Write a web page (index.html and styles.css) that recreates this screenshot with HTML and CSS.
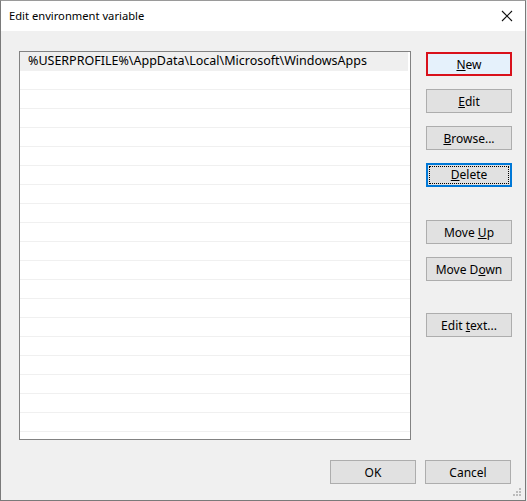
FILE: index.html
```html
<!DOCTYPE html>
<html lang="en">
<head>
    <meta charset="UTF-8">
    <title>Edit environment variable</title>
    <link rel="stylesheet" href="styles.css">
</head>
<body>

<div class="window">
    <div class="titlebar">
        <span class="title">Edit environment variable</span>
        <svg class="close" width="12" height="12" viewBox="0 0 12 12">
            <path d="M1 1 L11 11 M11 1 L1 11" stroke="#111" stroke-width="1.1" fill="none"/>
        </svg>
    </div>

    <div class="content">
        <div class="main">
            <div class="list" id="list">
                <!-- rows are filled by the script below -->
            </div>

            <div class="side">
                <button class="btn btn-marked"><u>N</u>ew</button>
                <button class="btn"><u>E</u>dit</button>
                <button class="btn"><u>B</u>rowse...</button>
                <button class="btn btn-focus"><span class="focus-ring"><u>D</u>elete</span></button>
                <button class="btn gap-big">Move <u>U</u>p</button>
                <button class="btn">Move D<u>o</u>wn</button>
                <button class="btn gap-text">Edit <u>t</u>ext...</button>
            </div>
        </div>

        <div class="footer">
            <button class="btn">OK</button>
            <button class="btn">Cancel</button>
        </div>
    </div>

    <svg class="grip" width="9" height="9" viewBox="0 0 9 9">
        <rect x="6" y="0" width="2" height="2" fill="#bcbcbc"/>
        <rect x="3" y="3" width="2" height="2" fill="#bcbcbc"/>
        <rect x="6" y="3" width="2" height="2" fill="#bcbcbc"/>
        <rect x="0" y="6" width="2" height="2" fill="#bcbcbc"/>
        <rect x="3" y="6" width="2" height="2" fill="#bcbcbc"/>
        <rect x="6" y="6" width="2" height="2" fill="#bcbcbc"/>
    </svg>
</div>

<script>
    const list = document.getElementById('list');
    const paths = ['%USERPROFILE%\\AppData\\Local\\Microsoft\\WindowsApps'];

    for (let i = 0; i < 21; i++) {
        const row = document.createElement('div');
        row.classList.add('row');
        if (i === 0) row.classList.add('selected');
        row.textContent = paths[i] || '';
        list.appendChild(row);
    }
</script>

</body>
</html>
```

FILE: styles.css
```css
* {
    margin: 0;
    padding: 0;
    box-sizing: border-box;
}

body {
    font-family: 'Noto Sans', 'Open Sans', sans-serif;
    font-size: 12px;
    color: #000;
    background-color: #e9e9e9;
}

.window {
    position: relative;
    width: 526px;
    height: 501px;
    border: 1px solid #7a7a7a;
    border-top-color: #9a9a9a;
    background-color: #f0f0f0;
}

.titlebar {
    height: 30px;
    background-color: #fff;
    display: flex;
    align-items: center;
    justify-content: space-between;
    padding: 0 12px 0 8px;
}

.title {
    font-size: 11.2px;
    padding-bottom: 1px;
}

.content {
    padding: 20px 13px 0 18px;
}

.main {
    display: flex;
    gap: 15px;
}

.list {
    width: 392px;
    height: 389px;
    border: 1px solid #828282;
    background-color: #fff;
    overflow: hidden;
}

.row {
    height: 19px;
    line-height: 18px;
    padding-left: 8px;
    font-size: 12.5px;
    border-bottom: 1px solid #f0f0f0;
    white-space: nowrap;
}

.row.selected {
    background-color: #efefef;
    margin-right: 2px;
}

.side {
    display: flex;
    flex-direction: column;
    gap: 13px;
    padding-top: 1px;
}

.btn {
    width: 86px;
    height: 24px;
    font-family: inherit;
    font-size: 12px;
    color: #000;
    text-align: center;
    white-space: nowrap;
    background-color: #e1e1e1;
    border: 1px solid #adadad;
}

.btn-marked {
    background-color: #e5f1fb;
    border: 2px solid #d9111b;
}

.btn-focus {
    border: 2px solid #0078d7;
    padding: 1px;
}

.focus-ring {
    display: block;
    height: 18px;
    line-height: 16px;
    border: 1px dotted #000;
}

.gap-big {
    margin-top: 20px;
}

.gap-text {
    margin-top: 19px;
}

.footer {
    display: flex;
    justify-content: flex-end;
    gap: 9px;
    margin-top: 20px;
    padding-right: 1px;
}

.grip {
    position: absolute;
    right: 3px;
    bottom: 3px;
}
```
